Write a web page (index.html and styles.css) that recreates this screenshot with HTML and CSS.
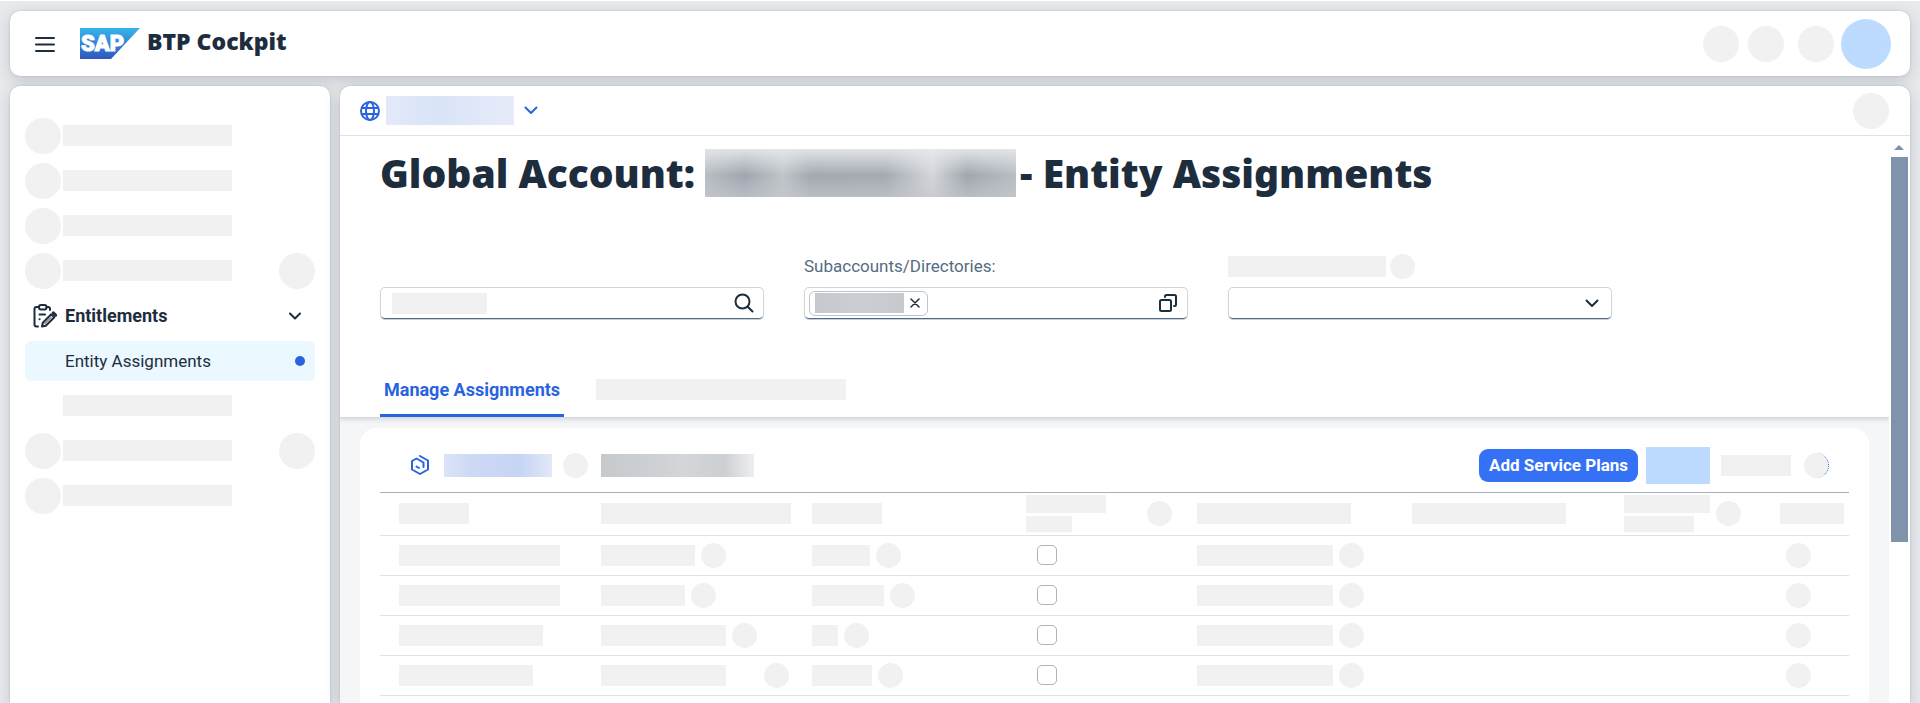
FILE: index.html
```html
<!DOCTYPE html>
<html lang="en">
<head>
<meta charset="utf-8">
<meta name="viewport" content="width=device-width, initial-scale=1">
<title>BTP Cockpit</title>
<link rel="stylesheet" href="styles.css">
</head>
<body>
<header class="shell">
  <button class="icon-btn menu" aria-label="Menu">
    <svg width="20" height="16" viewBox="0 0 20 16" fill="none" stroke="currentColor" stroke-width="2" stroke-linecap="round"><path d="M1 2h18M1 8.500h18M1 15h18"/></svg>
  </button>
  <svg class="logo" width="60" height="31" viewBox="0 0 60 31" role="img" aria-label="SAP">
    <defs><linearGradient id="sap" x1="0" y1="0" x2="0" y2="1"><stop offset="0" stop-color="#38b4ea"/><stop offset=".5" stop-color="#3386d8"/><stop offset="1" stop-color="#2f56bd"/></linearGradient></defs>
    <path d="M0 0h60L31 31H0z" fill="url(#sap)"/>
    <text class="logo-text" x="1" y="23">SAP</text>
  </svg>
  <span class="product">BTP Cockpit</span>
  <div class="shell-actions">
    <span class="ph dot-lg"></span><span class="ph dot-lg"></span><span class="ph dot-lg last"></span><span class="avatar"></span>
  </div>
</header>
<div class="body">
  <nav class="side">
    <ul class="nav">
      <li class="row"><span class="ph dot-lg"></span><span class="ph bar nav-bar"></span></li>
      <li class="row"><span class="ph dot-lg"></span><span class="ph bar nav-bar"></span></li>
      <li class="row"><span class="ph dot-lg"></span><span class="ph bar nav-bar"></span></li>
      <li class="row"><span class="ph dot-lg"></span><span class="ph bar nav-bar"></span><span class="ph dot-lg end"></span></li>
      <li class="row"><button class="group">
        <svg class="group-icon" width="24" height="24" viewBox="0 0 24 24" fill="none" stroke="currentColor" stroke-width="2" stroke-linecap="round" stroke-linejoin="round"><path d="M5 3H3.500Q1.500 3 1.500 5V20.500Q1.500 22.500 3.500 22.500H5M13.500 3H15Q17 3 17 5V6"/><rect x="6" y="1" width="7.500" height="4.500" rx="2"/><path d="M6.500 10.500H12M6.500 15.200H6.600"/><path d="M9 22.500L9.800 18.700L18.300 10.200L21.300 13.200L12.800 21.700Z"/><path d="M11.500 20L18 13.500" stroke-width="1"/><path d="M20.300 8.800L22.700 11.200" stroke-width="3"/></svg>
        <span>Entitlements</span>
        <svg class="group-arrow" width="12" height="8" viewBox="0 0 12 8" fill="none" stroke="currentColor" stroke-width="2" stroke-linecap="round" stroke-linejoin="round"><path d="M1 1.500L6 6.500L11 1.500"/></svg>
      </button></li>
      <li class="row"><a class="item" href="#" aria-current="page"><span>Entity Assignments</span><i class="marker"></i></a></li>
      <li class="row sub"><span class="ph bar nav-bar"></span></li>
      <li class="row"><span class="ph dot-lg"></span><span class="ph bar nav-bar"></span><span class="ph dot-lg end"></span></li>
      <li class="row"><span class="ph dot-lg"></span><span class="ph bar nav-bar"></span></li>
    </ul>
  </nav>
  <main class="main">
    <div class="crumbs">
      <button class="crumb" aria-label="Switch account">
        <svg width="20" height="20" viewBox="0 0 20 20" fill="none" stroke="currentColor" stroke-width="2"><circle cx="10" cy="10" r="9"/><ellipse cx="10" cy="10" rx="4" ry="9"/><path d="M2 7h16M2 13h16"/></svg>
        <span class="crumb-name"></span>
        <svg width="14" height="9" viewBox="0 0 14 9" fill="none" stroke="currentColor" stroke-width="2" stroke-linecap="round" stroke-linejoin="round"><path d="M1.500 1.500L7 7L12.500 1.500"/></svg>
      </button>
      <span class="ph dot-lg"></span>
    </div>
    <div class="scroller">
      <div class="page">
        <section class="head">
          <h1 class="title"><span>Global Account:</span><span class="account"></span><span>- Entity Assignments</span></h1>
          <div class="filters">
            <div class="filter">
              <div class="label"></div>
              <div class="field search">
                <span class="ph bar hint"></span><input class="input" type="search" aria-label="Search">
                <button class="icon-btn" aria-label="Search"><svg width="20" height="20" viewBox="0 0 20 20" fill="none" stroke="currentColor" stroke-width="2" stroke-linecap="round"><circle cx="8.500" cy="8.500" r="7"/><path d="M13.700 13.700L18.500 18.500"/></svg></button>
              </div>
            </div>
            <div class="filter">
              <label class="label" for="sub">Subaccounts/Directories:</label>
              <div class="field multi">
                <span class="token"><span class="token-name"></span><button class="icon-btn" aria-label="Remove"><svg width="10" height="10" viewBox="0 0 10 10" fill="none" stroke="currentColor" stroke-width="1.500" stroke-linecap="round"><path d="M1 1l8 8M9 1L1 9"/></svg></button></span>
                <input class="input" id="sub" type="text">
                <button class="icon-btn" aria-label="Value help"><svg width="18" height="18" viewBox="0 0 18 18" fill="none" stroke="currentColor" stroke-width="2" stroke-linecap="round" stroke-linejoin="round"><rect x="1" y="6" width="11" height="11" rx="1.500"/><path d="M6 3V2.500Q6 1 7.500 1H15.500Q17 1 17 2.500V10.500Q17 12 15.500 12H15"/></svg></button>
              </div>
            </div>
            <div class="filter">
              <div class="label"><span class="ph bar label-bar"></span><span class="ph dot"></span></div>
              <div class="field drop">
                <select class="select" aria-label="Filter"><option></option></select>
                <svg class="drop-arrow" width="14" height="9" viewBox="0 0 14 9" fill="none" stroke="currentColor" stroke-width="2" stroke-linecap="round" stroke-linejoin="round"><path d="M1.500 1.500L7 7L12.500 1.500"/></svg>
              </div>
            </div>
          </div>
          <div class="tabs" role="tablist">
            <button class="tab" role="tab" aria-selected="true">Manage Assignments</button>
            <span class="ph bar tab-bar"></span>
          </div>
        </section>
        <section class="card">
          <div class="toolbar">
            <svg class="hex" width="18" height="20" viewBox="0 0 18 20" fill="none" stroke="currentColor" stroke-width="2" stroke-linejoin="round" stroke-linecap="round"><path d="M9 1L17 5.500V14.500L9 19L1 14.500V6L5.500 3.500L12.500 7.500V12"/><path d="M5.500 11.500L8 13"/></svg>
            <span class="space-name"></span>
            <span class="ph dot"></span>
            <span class="space-info"></span>
            <div class="tools">
              <button class="primary">Add Service Plans</button>
              <span class="tool-box"></span>
              <span class="ph bar w70 tool-bar"></span>
              <span class="ph dot refresh"></span>
            </div>
          </div>
          <table class="grid">
            <colgroup><col class="c1"><col class="c2"><col class="c3"><col class="c4"><col class="c5"><col class="c6"><col class="c7"><col class="c8"></colgroup>
            <thead><tr>
              <th><span class="ph bar w70"></span></th>
              <th><span class="ph bar w190"></span></th>
              <th><span class="ph bar w70"></span></th>
              <th><div class="cell split"><div class="stack"><span class="ph w80 line"></span><span class="ph w46 line short"></span></div><span class="ph dot"></span></div></th>
              <th><span class="ph bar w154"></span></th>
              <th><span class="ph bar w154"></span></th>
              <th><div class="cell"><div class="stack"><span class="ph w86 line"></span><span class="ph w70 line short"></span></div><span class="ph dot"></span></div></th>
              <th><span class="ph bar w64"></span></th>
            </tr></thead>
            <tbody>
              <tr>
                <td><span class="ph bar w161"></span></td>
                <td><div class="cell"><span class="ph bar w94"></span><span class="ph dot"></span></div></td>
                <td><div class="cell"><span class="ph bar w58"></span><span class="ph dot"></span></div></td>
                <td><input class="check" type="checkbox" aria-label="Auto-assign"></td>
                <td><div class="cell"><span class="ph bar w136"></span><span class="ph dot"></span></div></td>
                <td></td><td></td><td><div class="cell action"><span class="ph dot"></span></div></td>
              </tr>
              <tr>
                <td><span class="ph bar w161"></span></td>
                <td><div class="cell"><span class="ph bar w84"></span><span class="ph dot"></span></div></td>
                <td><div class="cell"><span class="ph bar w72"></span><span class="ph dot"></span></div></td>
                <td><input class="check" type="checkbox" aria-label="Auto-assign"></td>
                <td><div class="cell"><span class="ph bar w136"></span><span class="ph dot"></span></div></td>
                <td></td><td></td><td><div class="cell action"><span class="ph dot"></span></div></td>
              </tr>
              <tr>
                <td><span class="ph bar w144"></span></td>
                <td><div class="cell"><span class="ph bar w125"></span><span class="ph dot"></span></div></td>
                <td><div class="cell"><span class="ph bar w26"></span><span class="ph dot"></span></div></td>
                <td><input class="check" type="checkbox" aria-label="Auto-assign"></td>
                <td><div class="cell"><span class="ph bar w136"></span><span class="ph dot"></span></div></td>
                <td></td><td></td><td><div class="cell action"><span class="ph dot"></span></div></td>
              </tr>
              <tr>
                <td><span class="ph bar w134"></span></td>
                <td><div class="cell far"><span class="ph bar w125"></span><span class="ph dot"></span></div></td>
                <td><div class="cell"><span class="ph bar w60"></span><span class="ph dot"></span></div></td>
                <td><input class="check" type="checkbox" aria-label="Auto-assign"></td>
                <td><div class="cell"><span class="ph bar w136"></span><span class="ph dot"></span></div></td>
                <td></td><td></td><td><div class="cell action"><span class="ph dot"></span></div></td>
              </tr>
            </tbody>
          </table>
        </section>
      </div>
      <div class="scrollbar">
        <svg width="10" height="5" viewBox="0 0 10 5"><path d="M5 0L10 5H0z" fill="#7b91a8"/></svg>
        <div class="thumb"></div>
      </div>
    </div>
  </main>
</div>
</body>
</html>
```
FILE: styles.css
```css
* { box-sizing: border-box; }
body {
  margin: 0;
  height: 100vh;
  padding: 10px 10px 0;
  border-top: 1px solid #fff;
  display: flex;
  flex-direction: column;
  gap: 10px;
  overflow: hidden;
  background: #e9eaed;
  color: #1d2d3e;
  font: 17px/24px Roboto, "Liberation Sans", sans-serif;
}
button, input, select { font: inherit; color: inherit; }
button { padding: 0; border: 0; background: none; cursor: pointer; }
svg { display: block; flex: none; }

/* Placeholders */
.ph { display: block; flex: none; background: #f1f1f1; }
.bar { height: 21px; }
.dot { width: 25px; height: 25px; border-radius: 50%; }
.dot-lg { width: 36px; height: 36px; border-radius: 50%; }
.w26 { width: 26px; } .w46 { width: 46px; } .w58 { width: 58px; }
.w60 { width: 60px; } .w64 { width: 64px; } .w70 { width: 70px; }
.w72 { width: 72px; } .w80 { width: 80px; } .w84 { width: 84px; }
.w86 { width: 86px; } .w94 { width: 94px; } .w125 { width: 125px; }
.w134 { width: 134px; } .w136 { width: 136px; } .w144 { width: 144px; }
.w154 { width: 154px; } .w161 { width: 161px; } .w190 { width: 190px; }

/* Shell header */
.shell, .side, .main { background: #fff; box-shadow: 0 0 2px rgba(34, 54, 73, .2), 0 4px 16px rgba(34, 54, 73, .2); }
.shell {
  display: flex;
  align-items: center;
  flex: none;
  height: 65px;
  padding: 0 19px 0 25px;
  border-radius: 10px;
}
.icon-btn { display: flex; align-items: center; justify-content: center; flex: none; }
.logo { margin-left: 25px; }
.logo-text { font: 900 22px Roboto, sans-serif; fill: #fff; stroke: #fff; stroke-width: 1px; }
.product { margin-left: 7px; padding-bottom: 6px; font: 900 23px/28px "Noto Sans", sans-serif; }
.shell-actions { display: flex; align-items: center; gap: 9px; margin-left: auto; }
.shell-actions .last { margin-left: 5px; margin-right: -2px; }
.avatar { width: 50px; height: 50px; border-radius: 50%; background: #bddbff; }

.body { display: flex; flex: 1; gap: 10px; min-height: 0; }

/* Side navigation */
.side { flex: none; width: 320px; padding: 27px 15px; border-radius: 10px 10px 0 0; }
.nav { margin: 0; padding: 0; list-style: none; }
.row { display: flex; align-items: center; height: 45px; gap: 2px; }
.row.sub { padding-left: 38px; }
.nav-bar { width: 169px; }
.end { margin-left: auto; }
.group { display: flex; align-items: center; width: 100%; padding: 0 14px 0 8px; font-size: 18px; font-weight: 700; }
.group-icon { margin-right: 8px; }
.group-arrow { margin-left: auto; }
.item {
  display: flex;
  align-items: center;
  justify-content: space-between;
  width: 100%;
  height: 40px;
  padding: 0 10px 0 40px;
  border-radius: 6px;
  background: #ebf8ff;
  color: inherit;
  text-decoration: none;
}
.marker { width: 10px; height: 10px; border-radius: 50%; background: #2a63de; }

/* Main panel */
.main { display: flex; flex-direction: column; flex: 1; min-width: 0; border-radius: 10px 10px 0 0; overflow: hidden; }
.crumbs {
  display: flex;
  align-items: center;
  justify-content: space-between;
  flex: none;
  height: 50px;
  padding: 0 21px 0 20px;
  border-bottom: 1px solid #dfe1e3;
}
.crumb { display: flex; align-items: center; color: #2a63de; }
.crumb-name { width: 128px; height: 29px; margin: 0 10px 0 6px; background: linear-gradient(90deg, #e3e9f8, #d9e4f8 40%, #e0e7f8 70%, #e6ebf9); }
.scroller { display: flex; flex: 1; min-height: 0; }
.page { flex: 1; min-width: 0; overflow: hidden; background: #f5f6f8; }
.head { padding: 12px 40px 0; background: #fff; border-bottom: 1px solid #d5d8dc; box-shadow: 0 2px 4px rgba(34, 54, 73, .14); }
.title { display: flex; align-items: center; margin: 0; font: 900 39px/50px "Noto Sans", sans-serif; white-space: nowrap; }
.account {
  width: 311px;
  height: 48px;
  margin: 0 4px 0 10px;
  background:
    linear-gradient(180deg, rgba(232, 234, 236, .9), rgba(232, 234, 236, 0) 55%, rgba(196, 200, 204, .7)),
    linear-gradient(90deg, #b9bdc3, #9fa5af 13%, #c0c4c9 25%, #a3a8b1 34%, #a4a9b2 58%, #d4d6da 73%, #a0a6ae 84%, #b9bec4);
}
.filters { display: grid; grid-template-columns: repeat(3, minmax(0, 384px)); gap: 40px; margin-top: 56px; }
.label { display: flex; align-items: center; gap: 4px; height: 24px; margin-bottom: 9px; color: #556b82; }
.label-bar { width: 158px; }
.field {
  display: flex;
  align-items: center;
  height: 32px;
  border: 1px solid #ced6da;
  border-bottom-color: #556b82;
  border-radius: 5px;
  background: #fff;
  box-shadow: 0 1px 0 #c5d0dc;
}
.input { flex: 1; min-width: 0; height: 100%; padding: 0 8px; border: 0; outline: 0; background: none; }
.search { padding: 0 9px 0 11px; }
.hint { width: 95px; }
.multi { padding: 0 10px 0 4px; }
.token { display: flex; align-items: center; gap: 6px; height: 25px; padding: 0 7px 0 5px; border: 1px solid #bcc3ca; border-radius: 6px; }
.token-name { width: 89px; height: 20px; background: linear-gradient(90deg, #c5c8cd, #cbced3 50%, #c6c9ce); }
.drop { display: grid; }
.select { grid-area: 1 / 1; width: 100%; height: 100%; padding: 0 12px; border: 0; outline: 0; appearance: none; background: none; }
.drop-arrow { grid-area: 1 / 1; justify-self: end; margin-right: 12px; pointer-events: none; }
.tabs { display: flex; align-items: center; gap: 32px; height: 57px; margin-top: 41px; }
.tab { height: 57px; padding: 5px 4px 0; border-bottom: 3px solid #2a63de; color: #2a63de; font-size: 18px; font-weight: 700; }
.tab-bar { width: 250px; margin-top: 2px; }

/* Assignments card */
.card { margin: 10px 20px 0; padding: 0 20px; height: 100%; border-radius: 16px; background: #fff; }
.toolbar { display: flex; align-items: center; height: 65px; padding: 10px 20px 0 31px; border-bottom: 1px solid #a5b0bf; color: #2a63de; }
.space-name { width: 108px; height: 23px; margin: 0 11px 0 15px; background: linear-gradient(90deg, #dbe3f7, #cdd9f5 25%, #c6d4f4 70%, #e2e8f8); }
.space-info { width: 153px; height: 23px; margin-left: 13px; background: linear-gradient(90deg, #c7cacd, #cccfd3 30%, #d4d6d9 55%, #cccfd3 80%, #eeeeef); }
.tools { display: flex; align-items: center; margin-left: auto; }
.primary { height: 33px; padding: 0 10px; border-radius: 9px; background: #3471f5; color: #fff; font-weight: 700; }
.tool-box { width: 64px; height: 37px; margin: 0 11px 0 8px; background: #bddbff; }
.tool-bar { margin-right: 13px; }
.refresh { border-right: 1px dotted #2a63de; }
.grid { width: 100%; border-collapse: collapse; table-layout: fixed; }
.c1 { width: 13.75%; } .c2 { width: 14.36%; } .c3 { width: 14.57%; } .c4 { width: 11.64%; }
.c5 { width: 14.64%; } .c6 { width: 14.43%; } .c7 { width: 10.62%; } .c8 { width: 5.99%; }
th, td { height: 40px; padding: 0 0 0 19px; border-bottom: 1px solid #dfe1e4; vertical-align: middle; text-align: left; }
th { height: 42px; }
.cell { display: flex; align-items: center; gap: 6px; }
.cell.far { gap: 38px; }
.cell.split { justify-content: space-between; padding-right: 6px; }
.cell.action { padding-left: 6px; }
.stack { display: grid; gap: 3px; }
.line { height: 18px; }
.line.short { height: 16px; }
.check { display: block; appearance: none; width: 20px; height: 20px; margin: 0 0 0 11px; border: 1px solid #a9b4c1; border-radius: 5px; background: #fff; }

/* Scrollbar */
.scrollbar { display: flex; flex-direction: column; align-items: center; flex: none; gap: 7px; width: 21px; padding: 9px 1px 0 0; background: #fff; }
.thumb { width: 17px; height: 69%; background: #7f93ac; }
```
